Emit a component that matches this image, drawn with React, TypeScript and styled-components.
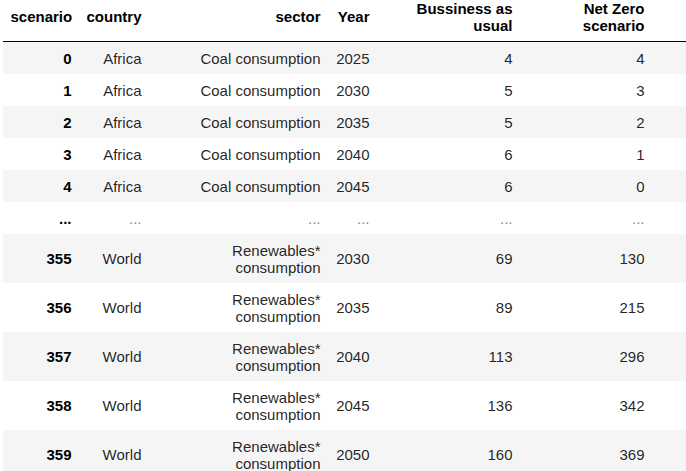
import React from "react";
import styled, { createGlobalStyle } from "styled-components";

const GlobalStyle = createGlobalStyle`
  html, body {
    margin: 0;
    padding: 0;
    background: #ffffff;
    overflow: hidden;
  }
  body {
    font-family: "Liberation Sans", Arial, sans-serif;
  }
`;

const Frame = styled.div`
  width: 686px;
  height: 471px;
  overflow: hidden;
  padding-left: 3px;
  box-sizing: border-box;
`;

const Table = styled.table`
  margin-top: -8px;
  width: 683px;
  table-layout: fixed;
  border-collapse: collapse;
  border-spacing: 0;
  font-size: 15px;
  line-height: 17px;
  color: rgba(0, 0, 0, 0.87);
`;

const Col = styled.col<{ $w?: number }>`
  width: ${(p) => (p.$w ? `${p.$w}px` : "auto")};
`;

const HeadRow = styled.tr`
  border-bottom: 1px solid #000;
`;

const HeadCell = styled.th`
  padding: 7.5px;
  font-weight: bold;
  text-align: right;
  vertical-align: middle;
  color: #000;
`;

const BodyRow = styled.tr`
  &:nth-child(odd) {
    background: #f5f5f5;
  }
`;

const IndexCell = styled.th`
  padding: 7.5px;
  font-weight: bold;
  text-align: right;
  vertical-align: middle;
  color: #000;
`;

const DataCell = styled.td<{ $muted?: boolean }>`
  padding: 7.5px;
  text-align: right;
  vertical-align: middle;
  color: ${(p) => (p.$muted ? "#8a8a8a" : "rgba(0, 0, 0, 0.87)")};
`;

type Row = [string, string, string, string, string, string];

const rows: Row[] = [
  ["0", "Africa", "Coal consumption", "2025", "4", "4"],
  ["1", "Africa", "Coal consumption", "2030", "5", "3"],
  ["2", "Africa", "Coal consumption", "2035", "5", "2"],
  ["3", "Africa", "Coal consumption", "2040", "6", "1"],
  ["4", "Africa", "Coal consumption", "2045", "6", "0"],
  ["...", "...", "...", "...", "...", "..."],
  ["355", "World", "Renewables* consumption", "2030", "69", "130"],
  ["356", "World", "Renewables* consumption", "2035", "89", "215"],
  ["357", "World", "Renewables* consumption", "2040", "113", "296"],
  ["358", "World", "Renewables* consumption", "2045", "136", "342"],
  ["359", "World", "Renewables* consumption", "2050", "160", "369"],
];

const headers = ["scenario", "country", "sector", "Year", "Bussiness as usual", "Net Zero scenario"];
const widths = [76, 70, 179, 49, 143, 132];

const App = () => {
  return (
    <Frame>
      <GlobalStyle />
      <Table>
        <colgroup>
          {widths.map((w, i) => (
            <Col key={i} $w={w} />
          ))}
          <Col />
        </colgroup>
        <thead>
          <HeadRow>
            {headers.map((h) => (
              <HeadCell key={h}>{h}</HeadCell>
            ))}
            <HeadCell />
          </HeadRow>
        </thead>
        <tbody>
          {rows.map(([idx, ...cells], i) => (
            <BodyRow key={i}>
              <IndexCell>{idx}</IndexCell>
              {cells.map((c, j) => (
                <DataCell key={j} $muted={c === "..."}>
                  {c}
                </DataCell>
              ))}
              <DataCell />
            </BodyRow>
          ))}
        </tbody>
      </Table>
    </Frame>
  );
};

export default App;
